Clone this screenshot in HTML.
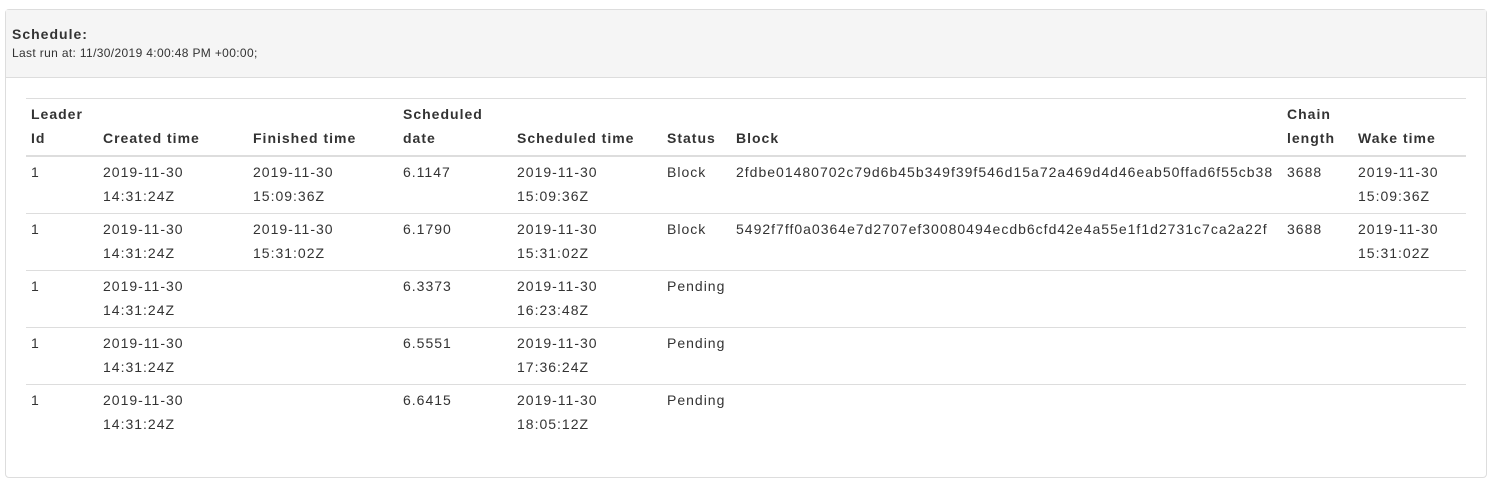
<!DOCTYPE html>
<html><head><style>
*{box-sizing:border-box}
body{margin:0;font-family:"Liberation Sans",Arial,sans-serif;font-size:14px;color:#333;background:#fff;letter-spacing:1px}
.panel{position:absolute;left:5px;top:9px;width:1482px;height:469px;border:1px solid #ddd;border-radius:4px}
.head{background:#f5f5f5;border-bottom:1px solid #ddd;height:68px;padding:14px 6px 0 6px}
.head b{display:block;font-size:14px;line-height:20px}
.head small{display:block;font-size:12px;line-height:18px;letter-spacing:0.35px}
table{position:absolute;left:20px;top:88px;border-collapse:collapse;table-layout:fixed;width:1440px}
th,td{padding:3px 5px 5px;line-height:24px;text-align:left;white-space:nowrap;overflow:visible}
th{font-weight:bold;vertical-align:bottom;border-top:1px solid #ddd;border-bottom:2px solid #ddd}
td{vertical-align:top;border-top:1px solid #ddd}
tbody tr:first-child td{border-top:0}
</style></head><body>
<div class="panel">
<div class="head"><b>Schedule:</b><small>Last run at: 11/30/2019 4:00:48 PM +00:00;</small></div>
<table>
<colgroup><col style="width:72px"><col style="width:150px"><col style="width:150px"><col style="width:114px"><col style="width:150px"><col style="width:69px"><col style="width:551px"><col style="width:71px"><col style="width:113px"></colgroup>
<thead><tr><th>Leader<br>Id</th><th>Created time</th><th>Finished time</th><th>Scheduled<br>date</th><th>Scheduled time</th><th>Status</th><th>Block</th><th>Chain<br>length</th><th>Wake time</th></tr></thead>
<tbody>
<tr><td>1</td><td>2019-11-30<br>14:31:24Z</td><td>2019-11-30<br>15:09:36Z</td><td>6.1147</td><td>2019-11-30<br>15:09:36Z</td><td>Block</td><td>2fdbe01480702c79d6b45b349f39f546d15a72a469d4d46eab50ffad6f55cb38</td><td>3688</td><td>2019-11-30<br>15:09:36Z</td></tr>
<tr><td>1</td><td>2019-11-30<br>14:31:24Z</td><td>2019-11-30<br>15:31:02Z</td><td>6.1790</td><td>2019-11-30<br>15:31:02Z</td><td>Block</td><td>5492f7ff0a0364e7d2707ef30080494ecdb6cfd42e4a55e1f1d2731c7ca2a22f</td><td>3688</td><td>2019-11-30<br>15:31:02Z</td></tr>
<tr><td>1</td><td>2019-11-30<br>14:31:24Z</td><td></td><td>6.3373</td><td>2019-11-30<br>16:23:48Z</td><td>Pending</td><td></td><td></td><td></td></tr>
<tr><td>1</td><td>2019-11-30<br>14:31:24Z</td><td></td><td>6.5551</td><td>2019-11-30<br>17:36:24Z</td><td>Pending</td><td></td><td></td><td></td></tr>
<tr><td>1</td><td>2019-11-30<br>14:31:24Z</td><td></td><td>6.6415</td><td>2019-11-30<br>18:05:12Z</td><td>Pending</td><td></td><td></td><td></td></tr>
</tbody></table>
</div>
</body></html>
